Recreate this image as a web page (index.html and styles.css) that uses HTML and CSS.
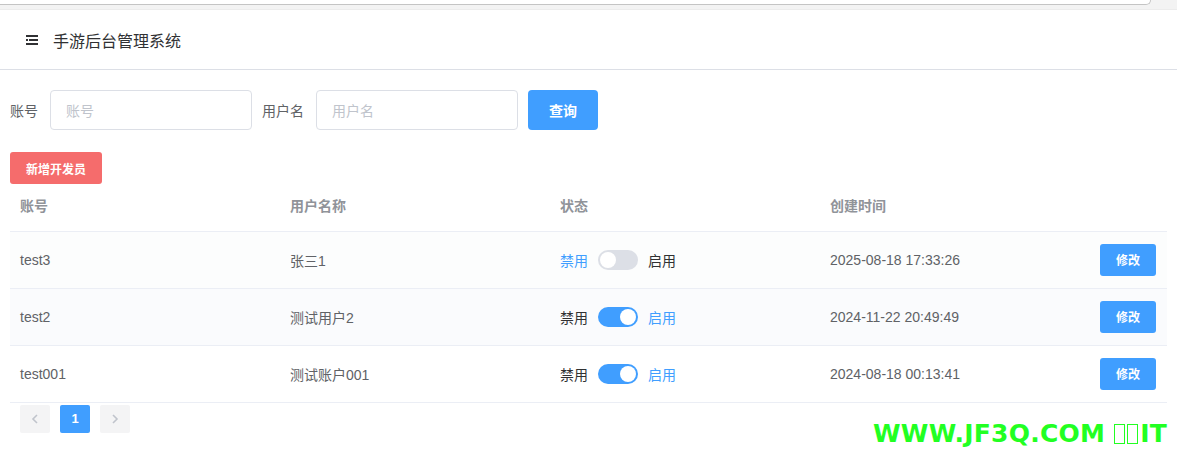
FILE: index.html
```html
<!DOCTYPE html>
<html lang="zh">
<head>
<meta charset="utf-8">
<title>手游后台管理系统</title>
<link rel="stylesheet" href="styles.css">
</head>
<body>
<div class="chrome"><div class="chrome-bar"></div></div>
<header class="topbar">
  <svg class="menu-icon" width="12" height="10" viewBox="0 0 12 10"><rect x="0" y="0" width="12" height="2" fill="#303133"/><rect x="3" y="4" width="9" height="2" fill="#303133"/><rect x="0" y="4" width="2" height="2" fill="#303133"/><rect x="0" y="8" width="12" height="2" fill="#303133"/></svg>
  <span class="title">手游后台管理系统</span>
</header>
<main class="content">
  <form class="search">
    <label class="lbl">账号</label>
    <input class="inp" placeholder="账号">
    <label class="lbl">用户名</label>
    <input class="inp" placeholder="用户名">
    <button type="button" class="btn-primary">查询</button>
  </form>
  <button type="button" class="btn-danger">新增开发员</button>
  <table class="tbl">
    <thead>
      <tr><th>账号</th><th>用户名称</th><th>状态</th><th>创建时间</th><th></th></tr>
    </thead>
    <tbody>
      <tr class="r1">
        <td>test3</td><td>张三1</td>
        <td><div class="sw-cell"><span class="on">禁用</span><span class="sw"></span><span>启用</span></div></td>
        <td>2025-08-18 17:33:26</td>
        <td class="act"><button type="button" class="btn-edit">修改</button></td>
      </tr>
      <tr class="r2">
        <td>test2</td><td>测试用户2</td>
        <td><div class="sw-cell"><span>禁用</span><span class="sw active"></span><span class="on">启用</span></div></td>
        <td>2024-11-22 20:49:49</td>
        <td class="act"><button type="button" class="btn-edit">修改</button></td>
      </tr>
      <tr>
        <td>test001</td><td>测试账户001</td>
        <td><div class="sw-cell"><span>禁用</span><span class="sw active"></span><span class="on">启用</span></div></td>
        <td>2024-08-18 00:13:41</td>
        <td class="act"><button type="button" class="btn-edit">修改</button></td>
      </tr>
    </tbody>
  </table>
  <nav class="pager">
    <button type="button" class="pg pg-dis"><svg width="8" height="10" viewBox="0 0 8 10"><path d="M6 1 L2 5 L6 9" fill="none" stroke="#c0c4cc" stroke-width="1.6"/></svg></button>
    <button type="button" class="pg pg-cur">1</button>
    <button type="button" class="pg pg-dis"><svg width="8" height="10" viewBox="0 0 8 10"><path d="M2 1 L6 5 L2 9" fill="none" stroke="#c0c4cc" stroke-width="1.6"/></svg></button>
  </nav>
</main>
<div class="watermark">WWW.JF3Q.COM <span class="tofu"></span><span class="tofu"></span>IT</div>
</body>
</html>
```
FILE: styles.css
```css
html, body {
  margin: 0;
  padding: 0;
  background: #fff;
  font-family: "Liberation Sans", "Noto Sans CJK SC", sans-serif;
  color: #606266;
}
.chrome {
  height: 9px;
  background: #f3f3f3;
  border-bottom: 1px solid #ececec;
}
.chrome-bar {
  height: 4px;
  width: 1150px;
  background: #fff;
  border-bottom: 1px solid #c4c4c4;
  border-right: 1px solid #c4c4c4;
  border-bottom-right-radius: 10px;
}
.topbar {
  height: 60px;
  border-bottom: 1px solid #dcdfe6;
  display: flex;
  align-items: center;
  padding-left: 26px;
  box-sizing: border-box;
}
.menu-icon { margin-right: 15px; }
.title {
  font-family: "Noto Sans CJK SC", sans-serif;
  font-size: 16px;
  color: #303133;
}
.content {
  padding: 20px 10px 0 10px;
  position: relative;
}
.search {
  display: flex;
  align-items: center;
  height: 40px;
  margin: 0;
}
.lbl {
  font-family: "Noto Sans CJK SC", sans-serif;
  font-size: 14px;
  color: #606266;
  margin-right: 12px;
}
.inp {
  width: 202px;
  height: 40px;
  box-sizing: border-box;
  border: 1px solid #dcdfe6;
  border-radius: 4px;
  padding: 0 15px;
  font-family: "Noto Sans CJK SC", sans-serif;
  font-size: 14px;
  outline: none;
  margin-right: 10px;
}
.inp::placeholder { color: #c0c4cc; }
.btn-primary {
  width: 70px;
  height: 40px;
  border: none;
  border-radius: 4px;
  background: #409eff;
  color: #fff;
  font-family: "Noto Sans CJK SC", sans-serif;
  font-size: 14px;
  font-weight: bold;
}
.btn-danger {
  display: block;
  margin-top: 22px;
  width: 92px;
  height: 32px;
  border: none;
  border-radius: 3px;
  background: #f56c6c;
  color: #fff;
  font-family: "Noto Sans CJK SC", sans-serif;
  font-size: 12px;
  font-weight: bold;
  padding: 0;
}
.tbl {
  width: 1157px;
  border-collapse: collapse;
  margin-top: 0;
  font-size: 14px;
}
.tbl th {
  text-align: left;
  font-family: "Noto Sans CJK SC", sans-serif;
  color: #909399;
  font-weight: bold;
  font-size: 14px;
  height: 47px;
  padding: 0 10px 4px 10px;
  box-sizing: border-box;
  width: 270px;
  border-bottom: 1px solid #ebeef5;
}
.tbl th:last-child { width: auto; }
.tbl td {
  height: 56px;
  padding: 0 10px;
  border-bottom: 1px solid #ebeef5;
  color: #606266;
}
.tbl tr.r1 td { background: #fcfdfd; }
.tbl tr.r2 td { background: #fafbfd; }
.sw-cell {
  display: flex;
  align-items: center;
  font-family: "Noto Sans CJK SC", sans-serif;
  color: #303133;
}
.sw-cell .on { color: #409eff; }
.sw {
  width: 40px;
  height: 20px;
  border-radius: 10px;
  background: #dcdfe6;
  margin: 0 10px;
  position: relative;
}
.sw::after {
  content: "";
  position: absolute;
  top: 2px;
  left: 2px;
  width: 16px;
  height: 16px;
  border-radius: 50%;
  background: #fff;
}
.sw.active { background: #409eff; }
.sw.active::after { left: 22px; }
.act { text-align: right; padding-right: 11px !important; }
.btn-edit {
  width: 56px;
  height: 32px;
  border: none;
  border-radius: 3px;
  background: #409eff;
  color: #fff;
  font-family: "Noto Sans CJK SC", sans-serif;
  font-size: 12px;
  font-weight: bold;
}
.pager {
  display: flex;
  gap: 10px;
  padding: 2px 10px;
}
.pg {
  width: 30px;
  height: 28px;
  border: none;
  border-radius: 2px;
  background: #f4f4f5;
  display: flex;
  align-items: center;
  justify-content: center;
  padding: 0;
  font-family: "Liberation Sans", sans-serif;
  font-size: 13px;
  font-weight: bold;
}
.pg-cur { background: #409eff; color: #fff; }
.watermark {
  position: absolute;
  left: 873px;
  top: 419px;
  font-family: "DejaVu Sans", sans-serif;
  font-weight: bold;
  font-size: 25px;
  color: #22ff22;
  white-space: nowrap;
  letter-spacing: 0.25px;
}
.tofu {
  display: inline-block;
  width: 11px;
  height: 20px;
  border: 1.5px solid #22ff22;
  box-sizing: border-box;
  margin-right: 2px;
  vertical-align: -2px;
}
```
